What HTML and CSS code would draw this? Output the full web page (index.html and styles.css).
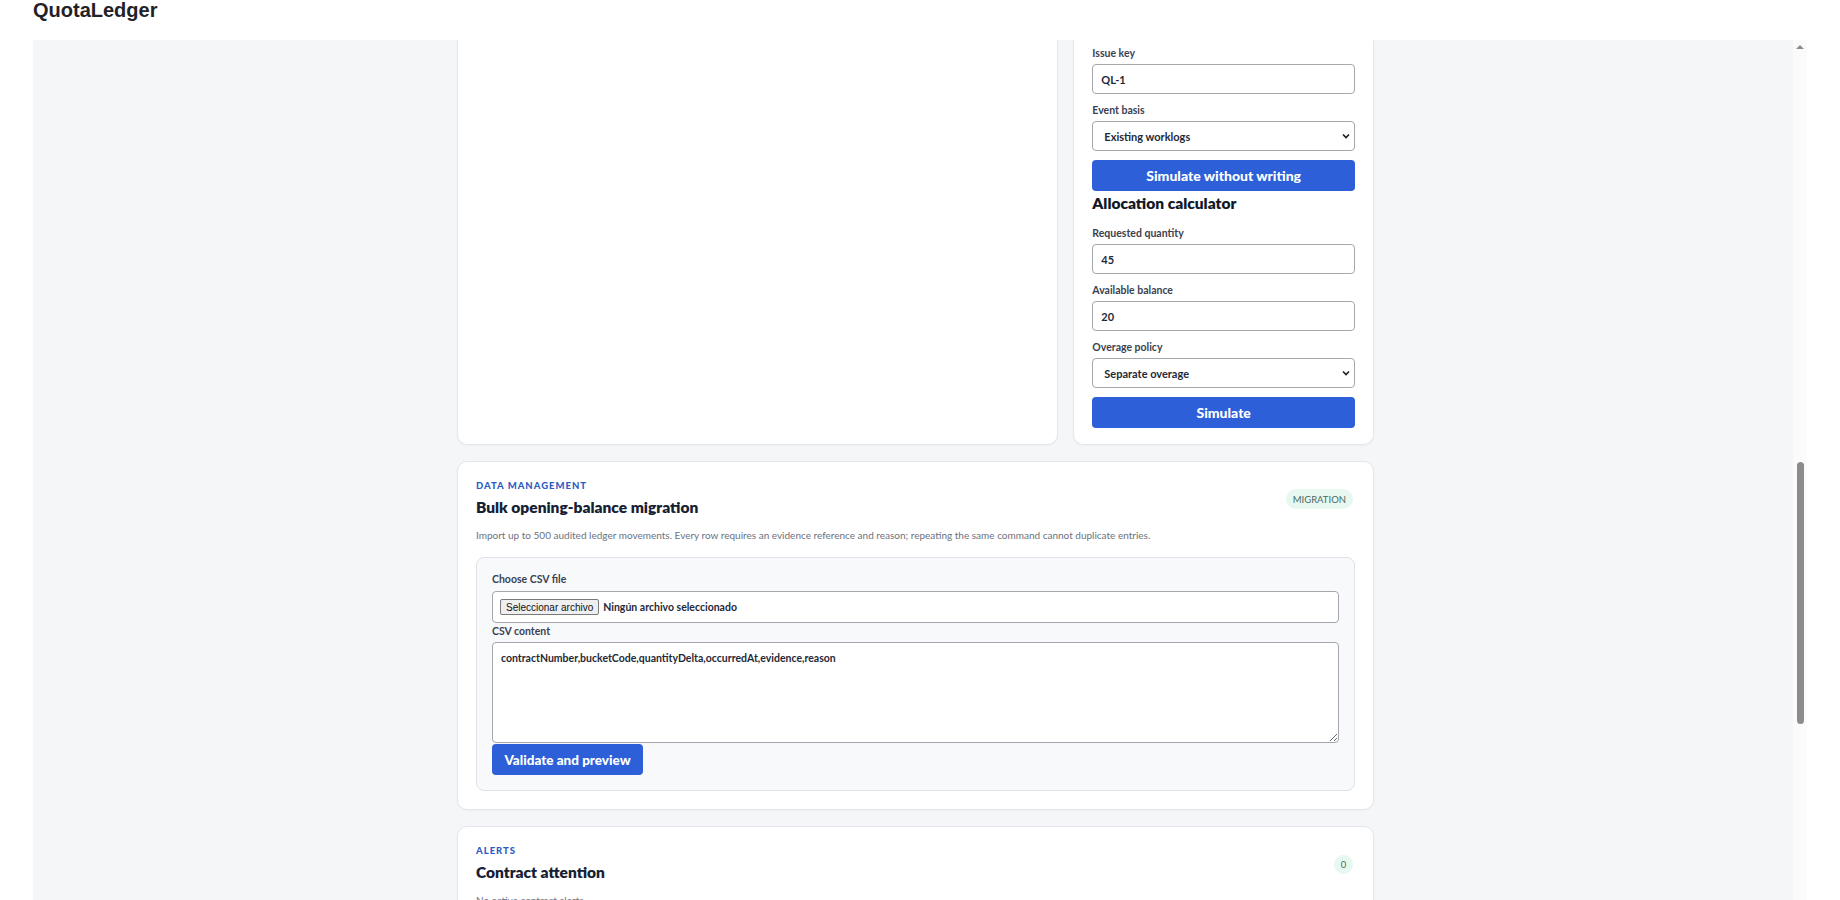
FILE: index.html
```html
<!DOCTYPE html>
<html lang="en">
<head>
<meta charset="utf-8">
<title>QuotaLedger</title>
<link rel="stylesheet" href="styles.css">
</head>
<body>
<header class="topbar">
  <h1 class="brand">QuotaLedger</h1>
</header>
<div class="viewport">
  <main class="scroll-area">
    <div class="stack">
      <div class="grid-row">
        <section class="card card-clipped"></section>
        <section class="card card-clipped form-card">
          <div class="field">
            <label class="lbl" for="issue-key">Issue key</label>
            <input id="issue-key" class="control" type="text" value="QL-1">
          </div>
          <div class="field">
            <label class="lbl" for="event-basis">Event basis</label>
            <select id="event-basis" class="control select">
              <option>Existing worklogs</option>
            </select>
          </div>
          <button class="btn btn-block" type="button">Simulate without writing</button>
          <h3 class="subhead">Allocation calculator</h3>
          <div class="field">
            <label class="lbl" for="req-qty">Requested quantity</label>
            <input id="req-qty" class="control" type="text" value="45">
          </div>
          <div class="field">
            <label class="lbl" for="avail">Available balance</label>
            <input id="avail" class="control" type="text" value="20">
          </div>
          <div class="field">
            <label class="lbl" for="overage">Overage policy</label>
            <select id="overage" class="control select">
              <option>Separate overage</option>
            </select>
          </div>
          <button class="btn btn-block" type="button">Simulate</button>
        </section>
      </div>

      <section class="card">
        <div class="card-head">
          <div>
            <p class="eyebrow">Data management</p>
            <h2 class="card-title">Bulk opening-balance migration</h2>
          </div>
          <span class="pill">MIGRATION</span>
        </div>
        <p class="desc">Import up to 500 audited ledger movements. Every row requires an evidence reference and reason; repeating the same command cannot duplicate entries.</p>
        <div class="panel">
          <span class="lbl">Choose CSV file</span>
          <label class="file-box">
            <input class="file-native" type="file" accept=".csv">
            <span class="file-btn">Seleccionar archivo</span>
            <span class="file-name">Ningún archivo seleccionado</span>
          </label>
          <label class="lbl lbl-tight" for="csv">CSV content</label>
          <textarea id="csv" class="csv-area">contractNumber,bucketCode,quantityDelta,occurredAt,evidence,reason</textarea>
          <button class="btn btn-inline" type="button">Validate and preview</button>
        </div>
      </section>

      <section class="card">
        <div class="card-head">
          <div>
            <p class="eyebrow">Alerts</p>
            <h2 class="card-title">Contract attention</h2>
          </div>
          <span class="pill pill-round">0</span>
        </div>
        <p class="desc">No active contract alerts.</p>
      </section>
    </div>
  </main>
  <div class="scrollbar" aria-hidden="true">
    <span class="sb-arrow"></span>
    <span class="sb-thumb" style="margin-top:413px;height:262px"></span>
  </div>
</div>
</body>
</html>
```

FILE: styles.css
```css
* { box-sizing: border-box; }

html, body {
  margin: 0;
  padding: 0;
  height: 100%;
  overflow: hidden;
  background: #ffffff;
}

body {
  font-family: Lato, "Noto Sans", "DejaVu Sans", sans-serif;
  color: #111827;
}

.topbar {
  height: 40px;
  padding: 0 33px;
}

.brand {
  margin: 0;
  font-family: "Liberation Sans", Arial, sans-serif;
  font-weight: 700;
  font-size: 20px;
  line-height: 20px;
  color: #1f2328;
}

.viewport {
  display: flex;
  height: 860px;
  margin: 0 33px;
}

.scroll-area {
  flex: 1;
  background: #f5f6f8;
  overflow: hidden;
  padding-left: 5px;
}

.stack {
  width: 917px;
  margin: 0 auto;
  display: flex;
  flex-direction: column;
  gap: 16px;
}

.grid-row {
  display: grid;
  grid-template-columns: 2fr 1fr;
  gap: 15px;
}

.card {
  background: #ffffff;
  border: 1px solid #e3e6ea;
  border-radius: 10px;
  padding: 18px;
  box-shadow: 0 1px 2px rgba(16, 24, 40, 0.03);
}

.card-clipped {
  border-top: none;
  border-top-left-radius: 0;
  border-top-right-radius: 0;
}

.form-card {
  padding: 6px 18px 16px;
}

.field {
  margin-bottom: 9px;
}

.lbl {
  display: block;
  font-size: 10.5px;
  line-height: 14px;
  font-weight: 700;
  color: #3a4250;
  margin-bottom: 4px;
}

.control {
  display: block;
  width: 100%;
  height: 30px;
  border: 1px solid #a4a7ab;
  border-radius: 4px;
  background: #ffffff;
  padding: 0 8px;
  font-family: inherit;
  font-size: 11px;
  font-weight: 700;
  color: #1f2937;
}

.select {
  appearance: none;
  -webkit-appearance: none;
  padding: 0 24px 0 11px;
  background-image: url("data:image/svg+xml;utf8,<svg xmlns='http://www.w3.org/2000/svg' width='8' height='6' viewBox='0 0 8 6'><path d='M1 1.5 L4 4.5 L7 1.5' fill='none' stroke='%23222' stroke-width='1.7'/></svg>");
  background-repeat: no-repeat;
  background-position: right 4px center;
  background-size: 8px 6px;
}

.btn {
  border: none;
  border-radius: 4px;
  background: #2c5fd8;
  color: #ffffff;
  font-family: inherit;
  font-weight: 900;
  font-size: 14px;
  cursor: pointer;
}

.btn-block {
  display: block;
  width: 100%;
  height: 31px;
}

.btn-inline {
  display: block;
  margin-top: 1px;
  height: 31px;
  padding: 0 10px;
  width: 151px;
  font-size: 13.5px;
}

.subhead {
  margin: 2px 0 13px;
  font-size: 15.5px;
  line-height: 20px;
  font-weight: 800;
  color: #111827;
}

.card-head {
  display: flex;
  align-items: center;
  justify-content: space-between;
}

.eyebrow {
  margin: 0 0 4px;
  font-size: 9.5px;
  line-height: 12px;
  font-weight: 900;
  letter-spacing: 1px;
  text-transform: uppercase;
  color: #2f5bc4;
}

.card-title {
  margin: 0;
  font-size: 15.5px;
  line-height: 22px;
  font-weight: 800;
  color: #162033;
}

.pill {
  display: inline-flex;
  align-items: center;
  justify-content: center;
  height: 20px;
  padding: 0 7px;
  border-radius: 10px;
  background: #e6f8f0;
  color: #4b6b5f;
  font-size: 9.5px;
  font-weight: 400;
  margin-right: 2px;
}

.pill-round {
  width: 19px;
  height: 19px;
  padding: 0;
  border-radius: 50%;
}

.desc {
  margin: 10px 0 15px;
  font-size: 10px;
  line-height: 14px;
  color: #6b7280;
}

.panel {
  background: #f8f9fb;
  border: 1px solid #dfe3e8;
  border-radius: 8px;
  padding: 14px 15px 15px;
}

.panel .lbl {
  margin-bottom: 5px;
}

.panel .lbl-tight {
  margin-top: 1px;
  margin-bottom: 4px;
}

.file-box {
  display: flex;
  align-items: center;
  gap: 4px;
  height: 32px;
  border: 1px solid #a4a7ab;
  border-radius: 4px;
  background: #ffffff;
  padding: 0 7px;
  cursor: pointer;
}

.file-native {
  width: 0;
  height: 0;
  opacity: 0;
  position: absolute;
  pointer-events: none;
}

.file-btn {
  display: inline-flex;
  align-items: center;
  height: 16px;
  padding: 0 5px;
  border: 1px solid #7a7a7a;
  border-radius: 2px;
  background: #efefef;
  font-family: "Liberation Sans", Arial, sans-serif;
  font-size: 10px;
  color: #111111;
}

.file-name {
  font-size: 10.5px;
  font-weight: 700;
  color: #1f2937;
}

.csv-area {
  display: block;
  width: 100%;
  height: 101px;
  border: 1px solid #a4a7ab;
  border-radius: 4px;
  background: #ffffff;
  padding: 9px 8px;
  font-family: inherit;
  font-size: 10.5px;
  font-weight: 700;
  color: #1f2937;
  resize: vertical;
}

.scrollbar {
  width: 14px;
  background: #fbfbfc;
  display: flex;
  flex-direction: column;
  align-items: center;
}

.sb-arrow {
  margin-top: 5px;
  width: 0;
  height: 0;
  border-left: 4px solid transparent;
  border-right: 4px solid transparent;
  border-bottom: 4px solid #8a8a8a;
}

.sb-thumb {
  display: block;
  width: 7px;
  border-radius: 4px;
  background: #8c8c8c;
}
```
